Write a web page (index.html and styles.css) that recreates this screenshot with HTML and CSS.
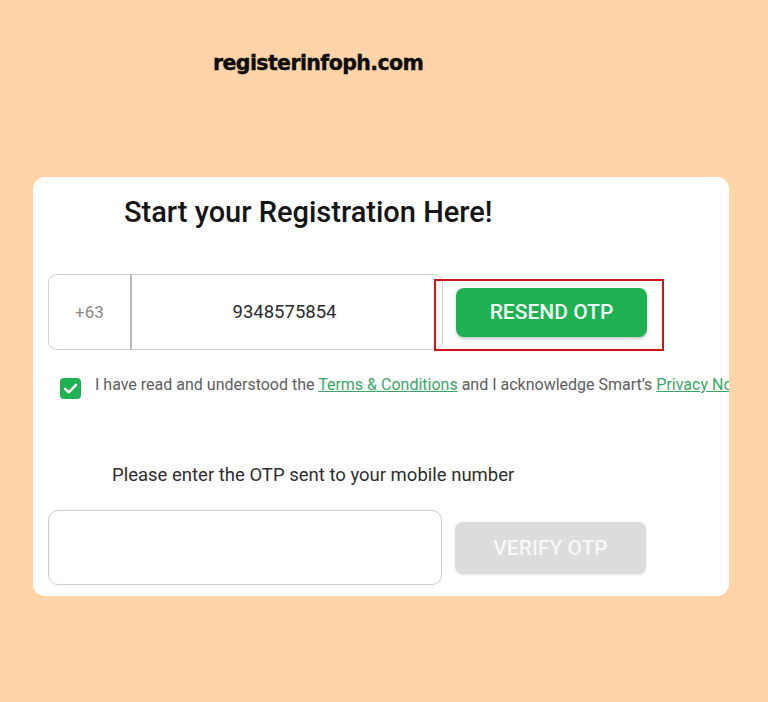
FILE: index.html
```html
<!DOCTYPE html>
<html lang="en">
<head>
<meta charset="utf-8">
<title>Start your Registration Here!</title>
<link rel="stylesheet" href="styles.css">
</head>
<body>
<header class="site">
  <span class="site-name">registerinfoph.com</span>
</header>
<main class="card">
  <h1 class="heading">Start your Registration Here!</h1>
  <div class="row phone-row">
    <div class="phone-group">
      <div class="prefix">+63</div>
      <div class="number">9348575854</div>
    </div>
    <div class="btn-wrap">
      <button class="btn btn-green">RESEND OTP</button>
      <span class="highlight"></span>
    </div>
  </div>
  <div class="row check-row">
    <span class="checkbox">
      <svg viewBox="0 0 21 21" width="21" height="21"><path d="M5 10.8 L8.8 14.4 L16 6.8" fill="none" stroke="#fff" stroke-width="2.4" stroke-linecap="round" stroke-linejoin="round"/></svg>
    </span>
    <span class="terms">I have read and understood the <a href="#">Terms &amp; Conditions</a> and I acknowledge Smart’s <a href="#">Privacy Notice</a></span>
  </div>
  <p class="otp-label">Please enter the OTP sent to your mobile number</p>
  <div class="row otp-row">
    <div class="otp-input"></div>
    <button class="btn btn-disabled">VERIFY OTP</button>
  </div>
</main>
</body>
</html>
```
FILE: styles.css
```css
html, body {
  margin: 0;
  padding: 0;
}
body {
  background: #ffd4a8;
  width: 768px;
  height: 702px;
  overflow: hidden;
  font-family: Roboto, "Liberation Sans", sans-serif;
}
.site {
  box-sizing: border-box;
  height: 177px;
  padding: 51px 0 0 213px;
}
.site-name {
  font-family: "DejaVu Sans", sans-serif;
  font-weight: 700;
  font-size: 20.5px;
  line-height: 24px;
  letter-spacing: -0.6px;
  color: #0d0d0d;
  -webkit-text-stroke: 0.4px #0d0d0d;
}
.card {
  box-sizing: border-box;
  margin-left: 33px;
  width: 696px;
  height: 419px;
  background: #fff;
  border-radius: 12px;
  padding: 18px 15px 11px;
  overflow: hidden;
}
.heading {
  margin: 0 0 45px 76px;
  font-size: 29px;
  line-height: 34px;
  font-weight: 500;
  color: #151515;
}
.row {
  display: flex;
  align-items: center;
}
.phone-group {
  box-sizing: border-box;
  width: 395px;
  height: 76px;
  border: 1.5px solid #cfcfcf;
  border-radius: 9px;
  display: flex;
}
.prefix {
  width: 81px;
  border-right: 2px solid #b9b9b9;
  display: flex;
  align-items: center;
  justify-content: center;
  font-size: 17px;
  color: #8a8a8a;
}
.number {
  flex: 1;
  display: flex;
  align-items: center;
  justify-content: center;
  font-size: 18.5px;
  color: #2b2b2b;
  padding-right: 5px;
}
.btn-wrap {
  position: relative;
  margin-left: 13px;
}
.btn {
  box-sizing: border-box;
  width: 191px;
  border: none;
  border-radius: 8px;
  font-family: Roboto, "Liberation Sans", sans-serif;
  font-weight: 500;
  font-size: 21px;
  padding: 0;
}
.btn-green {
  height: 49px;
  background: #1db152;
  color: #f2fff5;
  box-shadow: 0 2px 3px rgba(0, 0, 0, 0.22);
}
.highlight {
  position: absolute;
  left: -22px;
  top: -9px;
  width: 230px;
  height: 72px;
  box-sizing: border-box;
  border: 2px solid #d4121b;
}
.check-row {
  margin-top: 28px;
  height: 21px;
  white-space: nowrap;
}
.checkbox {
  flex: none;
  width: 21px;
  height: 21px;
  margin-left: 12px;
  border-radius: 4px;
  background: #1db152;
  display: block;
}
.checkbox svg {
  display: block;
}
.terms {
  margin-left: 14px;
  font-size: 16px;
  color: #5e5e5e;
  position: relative;
  top: -4px;
}
.terms a {
  color: #3aa865;
  text-decoration: underline;
}
.otp-label {
  margin: 65px 0 0 64px;
  font-size: 18.5px;
  line-height: 22px;
  color: #2e2e2e;
}
.otp-row {
  margin-top: 24px;
}
.otp-input {
  box-sizing: border-box;
  width: 394px;
  height: 75px;
  border: 1.5px solid #cccccc;
  border-radius: 10px;
}
.btn-disabled {
  margin-left: 13px;
  height: 52px;
  background: #dcdcdc;
  color: #f7f7f7;
  box-shadow: 0 1px 3px rgba(0, 0, 0, 0.12);
}
```
